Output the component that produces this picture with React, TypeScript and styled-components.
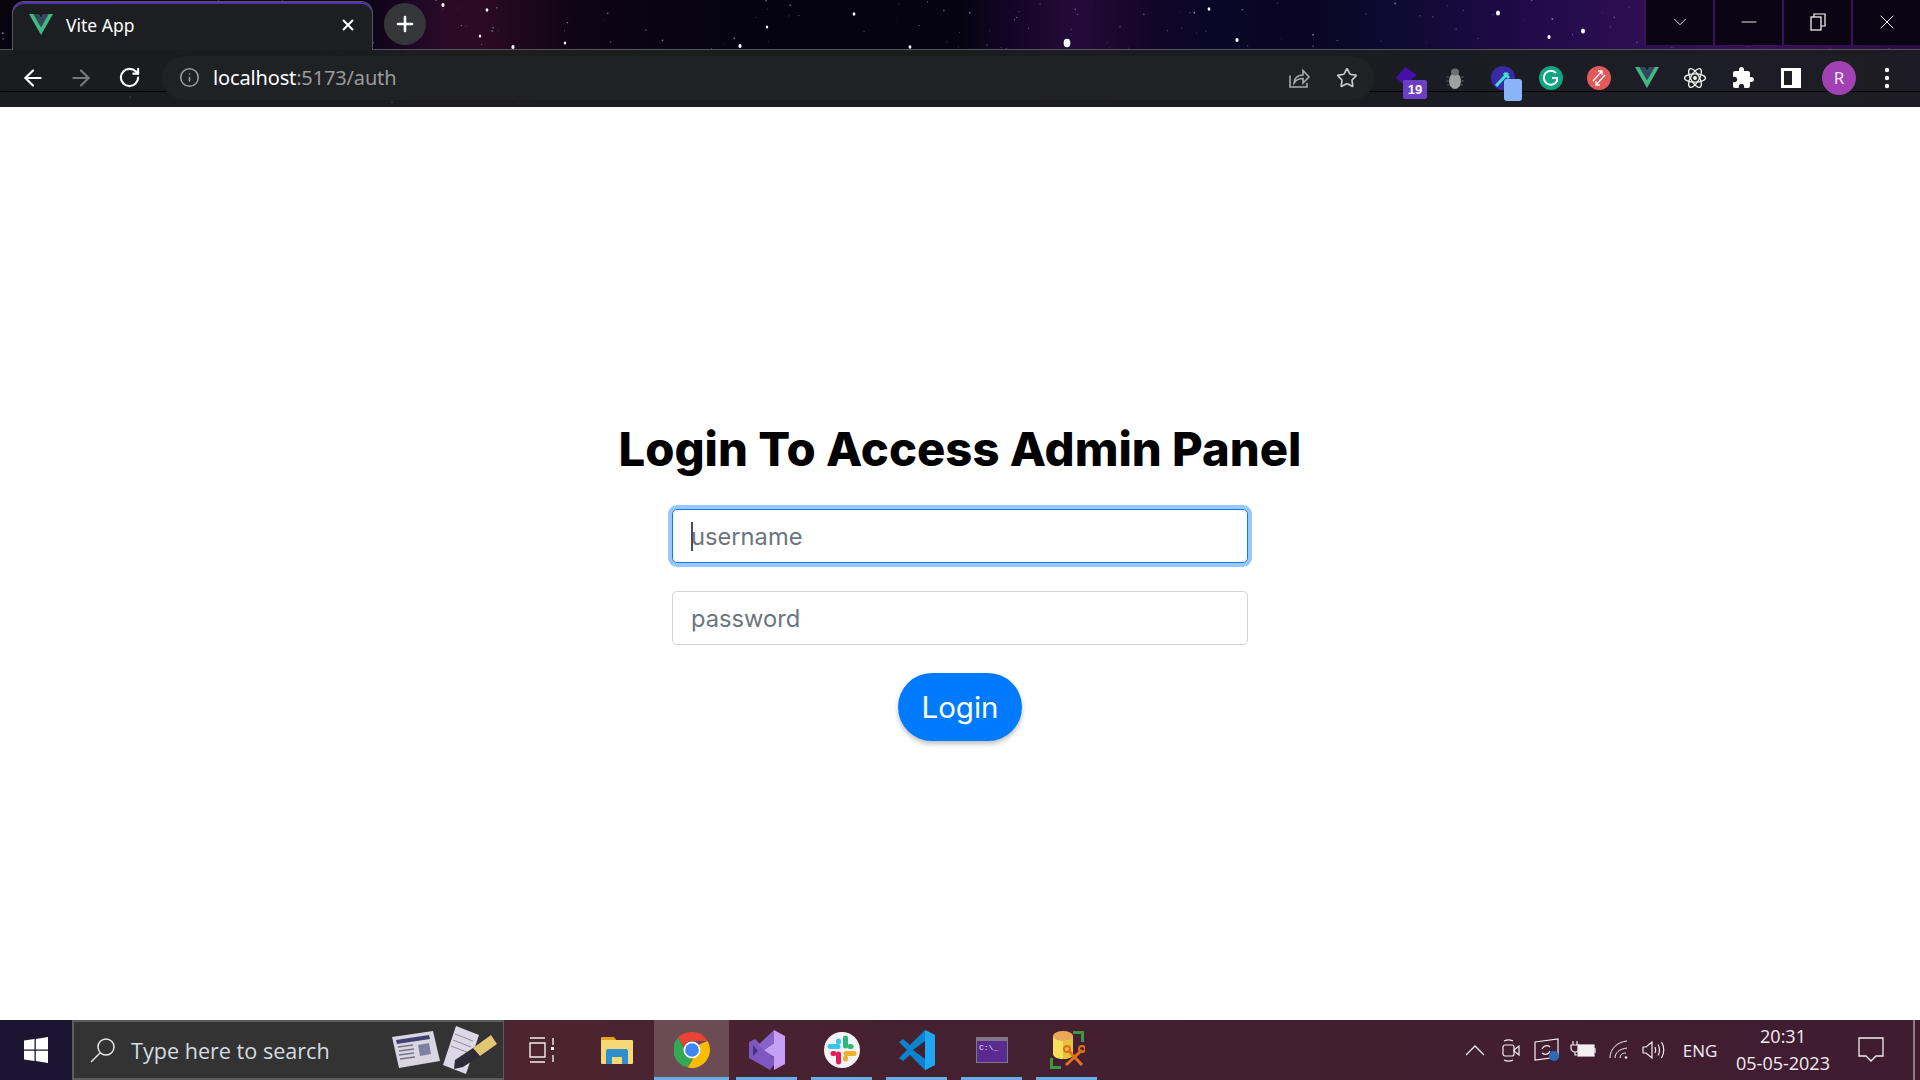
import { useMemo } from "react";
import styled, { createGlobalStyle } from "styled-components";
import { ArrowLeft, ArrowRight, ChevronDown, Info, Minus, Plus, RotateCw, Star, X } from "lucide-react";

const GlobalStyle = createGlobalStyle`
  html, body {
    margin: 0;
    height: 100%;
    background: #fff;
    overflow: hidden;
  }
  #root {
    height: 100%;
  }
  * {
    box-sizing: border-box;
  }
`;

const Screen = styled.div`
  height: 1080px;
  display: flex;
  flex-direction: column;
  font-family: "Noto Sans", sans-serif;
`;

const BrowserFrame = styled.header`
  position: relative;
  height: 107px;
  flex: none;
  overflow: hidden;
  background: linear-gradient(
    90deg,
    #07030f 0%,
    #0b0418 19%,
    #2a0a26 23%,
    #2c0a24 25%,
    #0e0414 30%,
    #050312 38%,
    #050312 50%,
    #150628 53%,
    #260a3a 56%,
    #120628 60%,
    #0a0628 63%,
    #0a0520 68%,
    #0c0a30 72%,
    #1c0a44 78%,
    #2a0e50 84%,
    #3a1058 92%,
    #2c0c48 100%
  );
`;

const StarField = styled.svg`
  position: absolute;
  inset: 0;
`;

const TabStrip = styled.div`
  position: relative;
  height: 50px;
  display: flex;
  align-items: flex-end;
  padding-left: 12px;
  border-bottom: 1px solid #55565a;
`;

const Tab = styled.div`
  width: 361px;
  height: 49px;
  margin-bottom: -1px;
  display: flex;
  align-items: center;
  padding: 0 15px 2px 16px;
  gap: 13px;
  background: #1c1e21;
  border: 1px solid #55565a;
  border-bottom: none;
  border-radius: 12px 12px 0 0;
  box-shadow: inset 0 2px 0 #5230b4;
  color: #fff;
  font-size: 17.5px;
`;

const TabTitle = styled.span`
  flex: 1;
`;

const NewTab = styled.div`
  width: 42px;
  height: 42px;
  margin: 0 0 4px 11px;
  border-radius: 50%;
  background: #35363a;
  color: #fff;
  display: flex;
  align-items: center;
  justify-content: center;
`;

const WindowControls = styled.div`
  margin-left: auto;
  align-self: flex-start;
  height: 45px;
  display: flex;
`;

const WindowButton = styled.div`
  width: 69px;
  padding-bottom: 2px;
  display: flex;
  align-items: center;
  justify-content: center;
  color: #fff;
  background: #0b0413;
  border-left: 2px solid #3d0f5c;
`;

const Toolbar = styled.div`
  position: relative;
  height: 57px;
  display: flex;
  align-items: center;
  padding: 0 9px 2px;
  background: rgba(28, 30, 33, 0.93);
  &::before {
    content: "";
    position: absolute;
    left: 0;
    right: 0;
    top: 41px;
    height: 1px;
    background: rgba(0, 0, 0, 0.85);
  }
`;

const ToolButton = styled.div<{ $dim?: boolean }>`
  position: relative;
  width: 48px;
  height: 48px;
  flex: none;
  display: flex;
  align-items: center;
  justify-content: center;
  color: ${(p) => (p.$dim ? "#77787a" : "#fff")};
`;

const OmniBox = styled.div`
  position: relative;
  flex: none;
  width: 1212px;
  height: 44px;
  margin: 0 9px 0 9px;
  padding: 0 3px 0 12px;
  display: flex;
  align-items: center;
  border-radius: 22px;
  background: #202124;
`;

const SecurityIcon = styled.div`
  width: 30px;
  display: flex;
  justify-content: center;
  color: #9a9b9d;
`;

const Url = styled.div`
  flex: 1;
  margin-left: 9px;
  font-size: 20px;
  color: #fff;
  letter-spacing: -0.15px;
`;

const UrlMuted = styled.span`
  color: #9a9b9d;
`;

const ExtensionBadge = styled.span`
  position: absolute;
  right: 4px;
  bottom: 3px;
  width: 24px;
  height: 19px;
  border-radius: 2px;
  background: #6b3fc4;
  color: #fff;
  font: 700 13px/19px "Liberation Sans", sans-serif;
  text-align: center;
`;

const PickerChip = styled.span`
  position: absolute;
  right: 5px;
  bottom: 1px;
  width: 18px;
  height: 22px;
  border-radius: 3px;
  background: #8ab4f8;
`;

const Avatar = styled.div`
  width: 34px;
  height: 34px;
  border-radius: 50%;
  background: #a142b4;
  color: #f2e6f5;
  font: 400 17px/34px "Noto Sans", sans-serif;
  text-align: center;
`;

const Page = styled.main`
  flex: 1;
  display: flex;
  flex-direction: column;
  align-items: center;
  padding-top: 312px;
  background: #fff;
`;

const Heading = styled.h1`
  margin: 0 0 30px;
  font: 800 47.2px/60px Inter, sans-serif;
  color: #000;
`;

const Form = styled.form`
  width: 576px;
  display: flex;
  flex-direction: column;
  align-items: center;
  gap: 28px;
`;

const Field = styled.div`
  position: relative;
  width: 100%;
`;

const TextField = styled.input<{ $focused?: boolean }>`
  display: block;
  width: 100%;
  height: 54px;
  padding: 0 18px;
  border: 1px solid ${(p) => (p.$focused ? "#0d7dfb" : "#ced4da")};
  border-radius: 5px;
  outline: none;
  box-shadow: ${(p) => (p.$focused ? "0 0 0 4px #99c8ff" : "none")};
  caret-color: transparent;
  font: 400 23.7px Inter, sans-serif;
  &::placeholder {
    color: #6c757d;
    opacity: 1;
  }
`;

const Caret = styled.span`
  position: absolute;
  left: 19px;
  top: 13px;
  width: 2px;
  height: 29px;
  background: #495057;
`;

const LoginButton = styled.button`
  width: 124px;
  height: 68px;
  border: none;
  border-radius: 34px;
  background: #007bff;
  color: #fff;
  font: 400 29.5px Inter, sans-serif;
  box-shadow: 0 3px 5px rgba(0, 0, 0, 0.25);
`;

const Taskbar = styled.footer`
  height: 60px;
  flex: none;
  display: flex;
  background: linear-gradient(90deg, #1d1631 0%, #1d1631 3.7%, #4c2530 27%, #452030 50%, #3f1c30 100%);
`;

const StartButton = styled.div`
  width: 72px;
  display: flex;
  align-items: center;
  justify-content: center;
  background: #1c1531;
`;

const SearchBox = styled.div`
  width: 432px;
  display: flex;
  align-items: center;
  padding: 0 6px 0 16px;
  background: #333;
  border: 2px solid #5c5c5c;
  border-right-width: 1px;
  color: #d6dce0;
  font: 400 21.6px "Open Sans", sans-serif;
`;

const SearchLabel = styled.span`
  flex: 1;
  margin-left: 15px;
`;

const TaskSlot = styled.div<{ $active?: boolean; $open?: boolean }>`
  position: relative;
  width: 75px;
  display: flex;
  align-items: center;
  justify-content: center;
  background: ${(p) => (p.$active ? "#6b4c55" : "transparent")};
  &::after {
    content: "";
    display: ${(p) => (p.$open ? "block" : "none")};
    position: absolute;
    bottom: 0;
    left: ${(p) => (p.$active ? "0" : "7px")};
    right: ${(p) => (p.$active ? "0" : "7px")};
    height: 3px;
    background: #67ade6;
  }
`;

const Tray = styled.div`
  margin-left: auto;
  display: flex;
  align-items: center;
  color: #f3eef0;
`;

const TrayIcon = styled.div<{ $w: number }>`
  width: ${(p) => p.$w}px;
  display: flex;
  justify-content: center;
`;

const TrayLang = styled.div`
  width: 50px;
  margin: 0 8px 0 4px;
  text-align: center;
  font: 400 17px "Open Sans", sans-serif;
`;

const Clock = styled.div`
  width: 100px;
  text-align: center;
  font: 400 18px/27px "Open Sans", sans-serif;
`;

const NotifyButton = styled.div`
  width: 80px;
  height: 60px;
  padding-right: 4px;
  display: flex;
  align-items: center;
  justify-content: center;
`;

const DesktopPeek = styled.div`
  width: 7px;
  height: 60px;
  border-left: 2px solid #8d7a85;
`;

function mulberry(seed: number) {
  let a = seed;
  return () => {
    a = (a + 0x6d2b79f5) | 0;
    let t = Math.imul(a ^ (a >>> 15), 1 | a);
    t = (t + Math.imul(t ^ (t >>> 7), 61 | t)) ^ t;
    return ((t ^ (t >>> 14)) >>> 0) / 4294967296;
  };
}

// the brightest stars of the theme picture
const BRIGHT_STARS: [number, number, number][] = [
  [443, 5, 1.6], [487, 10, 1.4], [480, 36, 1.2], [513, 47, 1.6], [565, 43, 1.2], [740, 46, 1.6], [767, 27, 1.2],
  [854, 14, 1.4], [910, 47, 1.4], [1067, 43, 3.4], [1209, 9, 1.4], [1237, 40, 1.6], [1498, 13, 2], [1583, 31, 2],
  [1549, 37, 1.6], [130, 97, 1.2], [392, 102, 1],
];

function Stars() {
  const dots = useMemo(() => {
    const rand = mulberry(19);
    return Array.from({ length: 300 }, () => ({
      x: rand() * 1920,
      y: rand() * 107,
      r: 0.4 + rand() * 0.6,
      o: 0.2 + rand() * 0.45,
    }));
  }, []);
  return (
    <StarField width="1920" height="107">
      {dots.map((d, i) => (
        <circle key={i} cx={d.x} cy={d.y} r={d.r} fill="#c9c2f5" opacity={d.o} />
      ))}
      {BRIGHT_STARS.map(([x, y, r]) => (
        <ellipse key={`${x}-${y}`} cx={x} cy={y} rx={r} ry={r * 1.25} fill="#fff" />
      ))}
    </StarField>
  );
}

function VueLogo({ size = 24 }: { size?: number }) {
  return (
    <svg width={size} height={size} viewBox="0 0 24 22">
      <path d="M0 0h9.6L12 4.2 14.4 0H24L12 21z" fill="#42b883" />
      <path d="M4.2 0h5.4L12 4.2 14.4 0h5.400L12 13.500z" fill="#35495e" />
    </svg>
  );
}

function ShareIcon() {
  return (
    <svg width="24" height="24" viewBox="0 0 24 24" fill="none" stroke="#a9aaac" strokeWidth="1.6">
      <path d="M3 9.5V21h17v-4" />
      <path d="M7 17c0-5 4-8 9-8V4.5l6 6.5-6 6v-4.500c-4 0-7 1.500-9 4.500z" />
    </svg>
  );
}

function BugIcon() {
  return (
    <svg width="22" height="24" viewBox="0 0 22 24">
      <ellipse cx="11" cy="15" rx="6" ry="8" fill="#a0a1a2" />
      <ellipse cx="11" cy="6" rx="4" ry="3.500" fill="#6e6f70" />
      <path d="M2 11h3M2 15h3M3 19h3M17 11h3M17 15h3M16 19h3" stroke="#55565a" strokeWidth="1" />
    </svg>
  );
}

function AtomIcon() {
  return (
    <svg width="24" height="24" viewBox="0 0 24 24" fill="none" stroke="#f1f1f1" strokeWidth="1.300">
      <ellipse cx="12" cy="12" rx="10.500" ry="4.200" />
      <ellipse cx="12" cy="12" rx="10.500" ry="4.200" transform="rotate(60 12 12)" />
      <ellipse cx="12" cy="12" rx="10.500" ry="4.200" transform="rotate(120 12 12)" />
      <circle cx="12" cy="12" r="2" fill="#f1f1f1" stroke="none" />
    </svg>
  );
}

function PuzzleIcon() {
  return (
    <svg width="24" height="24" viewBox="0 0 24 24">
      <path
        d="M20.5 11H19V7c0-1.100-.9-2-2-2h-4V3.500C13 2.120 11.880 1 10.500 1S8 2.120 8 3.500V5H4c-1.100 0-1.990.9-1.990 2v3.800H3.500c1.490 0 2.700 1.210 2.700 2.700s-1.210 2.700-2.700 2.700H2V20c0 1.100.9 2 2 2h3.800v-1.500c0-1.490 1.210-2.700 2.700-2.700 1.490 0 2.700 1.210 2.700 2.700V22H17c1.100 0 2-.9 2-2v-4h1.500c1.380 0 2.500-1.120 2.500-2.500S21.880 11 20.500 11z"
        fill="#fff"
      />
    </svg>
  );
}

function ChromeLogo() {
  return (
    <svg width="36" height="36" viewBox="0 0 36 36">
      <path d="M18 0a18 18 0 0 1 15.600 9H18a9 9 0 0 0-8.300 5.500L4 5.800A18 18 0 0 1 18 0z" fill="#ea4335" />
      <path d="M4 5.800l8.500 14.700a9 9 0 0 0 7 4.300L13.800 35.500A18 18 0 0 1 4 5.800z" fill="#34a853" />
      <path d="M33.600 9A18 18 0 0 1 13.800 35.500l7.900-13.600A9 9 0 0 0 25 12.500z" fill="#fbbc04" />
      <circle cx="18" cy="18" r="8.500" fill="#fff" />
      <circle cx="18" cy="18" r="6.800" fill="#4285f4" />
    </svg>
  );
}

function VisualStudioLogo() {
  return (
    <svg width="36" height="40" viewBox="0 0 36 40">
      <path d="M0 12l6-3 22 22-7 9L0 28z" fill="#7e57c2" />
      <path d="M4 15v11l5-5z" fill="#4a2e83" />
      <path d="M25 0l11 6v28l-11 6V27l-10-7 10-7z" fill="#c79ef5" />
      <path d="M25 0v13l-10 7-6-5z" fill="#8a63c9" />
    </svg>
  );
}

function SlackLogo() {
  return (
    <svg width="36" height="36" viewBox="0 0 36 36">
      <circle cx="18" cy="18" r="18" fill="#f4f4f4" />
      <g strokeWidth="5" strokeLinecap="round" fill="none">
        <path d="M6 14.500h8" stroke="#36c5f0" />
        <path d="M14.500 9v1" stroke="#36c5f0" />
        <path d="M21.500 6v8" stroke="#2eb67d" />
        <path d="M26 14.500h1" stroke="#2eb67d" />
        <path d="M22 21.500h8" stroke="#ecb22e" />
        <path d="M21.500 26v1" stroke="#ecb22e" />
        <path d="M14.500 22v8" stroke="#e01e5a" />
        <path d="M9 21.500h1" stroke="#e01e5a" />
      </g>
    </svg>
  );
}

function VsCodeLogo() {
  return (
    <svg width="36" height="40" viewBox="0 0 36 40">
      <path d="M26 0l10 5v30l-10 5L11 25l-7 6-4-3 8-8-8-8 4-3 7 6z" fill="#0a84cf" />
      <path d="M26 0l10 5v30l-10 5z" fill="#1fa8f1" />
      <path d="M26 11L14 20l12 9z" fill="#452030" />
    </svg>
  );
}

function TerminalLogo() {
  return (
    <svg width="32" height="26" viewBox="0 0 32 26">
      <rect width="32" height="26" fill="#7d7a86" />
      <rect x="1" y="4" width="30" height="21" fill="#5a2a91" />
      <text x="3" y="13" fontSize="8" fontFamily="Liberation Mono" fill="#e8e2f0">C:\_</text>
    </svg>
  );
}

function DbToolLogo() {
  return (
    <svg width="36" height="40" viewBox="0 0 36 40">
      <path d="M24 1h11v11h-3V4h-8zM1 28h3v8h8v3H1z" fill="#3b9a3e" />
      <path d="M4 6v18c0 3 5 5 10 5s10-2 10-5V6z" fill="#f6df5a" />
      <path d="M14 11v18c5 0 10-2 10-5V6c0 3-5 5-10 5z" fill="#e6c33e" />
      <ellipse cx="14" cy="6" rx="10" ry="5" fill="#e7a857" />
      <path d="M17 35L33 20M19 20l14 15" stroke="#e2711d" strokeWidth="3" />
      <circle cx="33" cy="19" r="3" fill="none" stroke="#e2711d" strokeWidth="2" />
      <circle cx="18" cy="19" r="3" fill="none" stroke="#e2711d" strokeWidth="2" />
    </svg>
  );
}

function WindowsLogo() {
  return (
    <svg width="24" height="26" viewBox="0 0 24 26">
      <path d="M0 3.500l10.500-1.400v10.300H0zM11.800 2L24 0v12.400H11.800zM0 13.700h10.500v10.200L0 22.500zM11.800 13.700H24V26l-12.200-2z" fill="#fff" />
    </svg>
  );
}

function SearchGlyph() {
  return (
    <svg width="26" height="26" viewBox="0 0 26 26" fill="none" stroke="#e8e8e8" strokeWidth="1.500">
      <circle cx="16" cy="10" r="8" />
      <path d="M10 16L1 25" />
    </svg>
  );
}

function NewsIcon() {
  return (
    <svg width="52" height="40" viewBox="0 0 52 40">
      <path d="M1 7L42 1l7 30-41 7z" fill="#d9d6e2" />
      <path d="M5 10l33-5 1 4-33 5z" fill="#41406e" />
      <path d="M7 17l15-2M8 21l15-2M8 25l15-2M9 29l15-2" stroke="#777488" strokeWidth="1.500" />
      <path d="M27 15l11-2 2 11-11 2z" fill="#7f7ea3" />
    </svg>
  );
}

function NotesIcon() {
  return (
    <svg width="54" height="48" viewBox="0 0 54 48">
      <path d="M13 0l23 9-13 39L0 39z" fill="#dcd8e6" />
      <path d="M12 8l18 7M10 14l18 7M8 20l18 7" stroke="#8c89a0" strokeWidth="1" />
      <path d="M12 34L42 14l6 9-28 18-9 2z" fill="#2d2b38" />
      <path d="M30 22l18-13 6 9-17 12z" fill="#e2c673" />
    </svg>
  );
}

function TaskViewGlyph() {
  return (
    <svg width="26" height="26" viewBox="0 0 26 26" fill="none" stroke="#f2eef0" strokeWidth="1.400">
      <path d="M1 1h15M1 25h15M1 6h15v14H1zM24 1v7M24 18v7" />
      <rect x="22" y="10" width="3" height="3" fill="#f2eef0" stroke="none" />
    </svg>
  );
}

function FolderLogo() {
  return (
    <svg width="32" height="28" viewBox="0 0 32 28">
      <path d="M0 2a1 1 0 0 1 1-1h12l3 4H0z" fill="#dfa328" />
      <rect y="4" width="32" height="24" rx="1" fill="#f8d775" />
      <path d="M5 28v-13a2 2 0 0 1 2-2h18a2 2 0 0 1 2 2v13h-6v-7H11v7z" fill="#2d8fd0" />
    </svg>
  );
}

function MeetGlyph() {
  return (
    <svg width="18" height="24" viewBox="0 0 18 24" fill="none" stroke="currentColor" strokeWidth="1.200">
      <rect x="1" y="7" width="11" height="11" rx="2" />
      <path d="M12 12l5-4v9l-5-4zM2 3c3-1.500 6-1.500 9 0M2 22c3 1.500 6 1.500 9 0" />
    </svg>
  );
}

function SyncGlyph() {
  return (
    <svg width="26" height="24" viewBox="0 0 26 24">
      <path d="M1 4L24 1v18L1 22z" fill="none" stroke="currentColor" strokeWidth="1.200" />
      <path d="M8 11a5 5 0 0 1 8-2M16 13a5 5 0 0 1-8 2" fill="none" stroke="currentColor" strokeWidth="1.200" />
      <circle cx="20" cy="18" r="5" fill="#2b6cb8" />
    </svg>
  );
}

function BatteryGlyph() {
  return (
    <svg width="26" height="18" viewBox="0 0 26 18" fill="none" stroke="currentColor" strokeWidth="1.200">
      <path d="M3 0v4M7 0v4M1 4h8v3a4 4 0 0 1-8 0zM5 11v3h2" />
      <rect x="8" y="4" width="16" height="11" fill="currentColor" />
      <path d="M25 7v5" />
    </svg>
  );
}

function WifiGlyph() {
  return (
    <svg width="20" height="20" viewBox="0 0 20 20" fill="none" stroke="currentColor" strokeWidth="1">
      <path d="M1 18C1 9 8 2 18 1M6 18c0-5 4-9 12-10M11 18c0-3 2-5 6-5" />
      <circle cx="17" cy="17.500" r="1.300" fill="currentColor" stroke="none" />
    </svg>
  );
}

function VolumeGlyph() {
  return (
    <svg width="24" height="20" viewBox="0 0 24 20" fill="none" stroke="currentColor" strokeWidth="1.200">
      <path d="M1 7h3l6-5v16l-6-5H1zM13 7c1 2 1 4 0 6M16 4.500c2 3 2 8 0 11M19.500 2c3 4.500 3 11.500 0 16" />
    </svg>
  );
}

function ChevronUpGlyph() {
  return (
    <svg width="20" height="12" viewBox="0 0 20 12" fill="none" stroke="currentColor" strokeWidth="1.300">
      <path d="M1 11l9-9 9 9" />
    </svg>
  );
}

function NotifyGlyph() {
  return (
    <svg width="26" height="26" viewBox="0 0 26 26" fill="none" stroke="#f3eef0" strokeWidth="1.300">
      <path d="M1 1h24v18h-7l-5 5-5-5H1z" />
    </svg>
  );
}

function RestoreGlyph() {
  return (
    <svg width="16" height="18" viewBox="0 0 16 18" fill="none" stroke="#fff" strokeWidth="1.200">
      <rect x="1" y="4" width="10" height="13" />
      <path d="M4 4V1h11v12h-4" />
    </svg>
  );
}

function PlainDiamond() {
  return (
    <svg width="24" height="24" viewBox="0 0 24 24">
      <path d="M10 1l12 8-6 5-4 7L1 12z" fill="#4411a8" />
    </svg>
  );
}

function PickerIcon() {
  return (
    <svg width="24" height="24" viewBox="0 0 24 24">
      <circle cx="12" cy="12" r="12" fill="#3b2aa8" />
      <path d="M5 20L17 7M13 7l5 5" stroke="#3fe0d0" strokeWidth="3" />
    </svg>
  );
}

function GrammarlyIcon() {
  return (
    <svg width="24" height="24" viewBox="0 0 24 24">
      <circle cx="12" cy="12" r="12" fill="#11a683" />
      <path d="M17 7a7 7 0 1 0 1 8v-3h-5" fill="none" stroke="#fff" strokeWidth="2" />
    </svg>
  );
}

function RedSwapIcon() {
  return (
    <svg width="24" height="24" viewBox="0 0 24 24" fill="none" stroke="#fff" strokeWidth="1.300">
      <circle cx="12" cy="12" r="12" fill="#e05a5a" stroke="none" />
      <path d="M6 15l9-10M9 19l9-10M11 5h4v4M9 15v4h4" />
    </svg>
  );
}

function SidePanelIcon() {
  return (
    <svg width="22" height="22" viewBox="0 0 22 22">
      <path d="M1 1h20v20H1z" fill="#fff" />
      <path d="M4 4h8v14H4z" fill="#1c1e21" />
    </svg>
  );
}

function KebabIcon() {
  return (
    <svg width="6" height="22" viewBox="0 0 6 22">
      <circle cx="3" cy="3" r="2.200" fill="#fff" />
      <circle cx="3" cy="11" r="2.200" fill="#fff" />
      <circle cx="3" cy="19" r="2.200" fill="#fff" />
    </svg>
  );
}

export default function App() {
  return (
    <>
      <GlobalStyle />
      <Screen>
        <BrowserFrame>
          <Stars />
          <TabStrip>
            <Tab>
              <VueLogo />
              <TabTitle>Vite App</TabTitle>
              <X size={18} strokeWidth={2.6} />
            </Tab>
            <NewTab>
              <Plus size={24} strokeWidth={2.6} />
            </NewTab>
            <WindowControls>
              <WindowButton>
                <ChevronDown size={22} strokeWidth={1} />
              </WindowButton>
              <WindowButton>
                <Minus size={24} strokeWidth={0.9} />
              </WindowButton>
              <WindowButton>
                <RestoreGlyph />
              </WindowButton>
              <WindowButton>
                <X size={24} strokeWidth={1} />
              </WindowButton>
            </WindowControls>
          </TabStrip>
          <Toolbar>
            <ToolButton>
              <ArrowLeft size={26} strokeWidth={2} />
            </ToolButton>
            <ToolButton $dim>
              <ArrowRight size={26} strokeWidth={2} />
            </ToolButton>
            <ToolButton>
              <RotateCw size={23} strokeWidth={2.2} />
            </ToolButton>
            <OmniBox>
              <SecurityIcon>
                <Info size={21} strokeWidth={1.8} />
              </SecurityIcon>
              <Url>
                localhost<UrlMuted>:5173/auth</UrlMuted>
              </Url>
              <ToolButton>
                <ShareIcon />
              </ToolButton>
              <ToolButton>
                <Star size={22} strokeWidth={1.8} color="#c9cacc" />
              </ToolButton>
            </OmniBox>
            <ToolButton>
              <PlainDiamond />
              <ExtensionBadge>19</ExtensionBadge>
            </ToolButton>
            <ToolButton>
              <BugIcon />
            </ToolButton>
            <ToolButton>
              <PickerIcon />
              <PickerChip />
            </ToolButton>
            <ToolButton>
              <GrammarlyIcon />
            </ToolButton>
            <ToolButton>
              <RedSwapIcon />
            </ToolButton>
            <ToolButton>
              <VueLogo />
            </ToolButton>
            <ToolButton>
              <AtomIcon />
            </ToolButton>
            <ToolButton>
              <PuzzleIcon />
            </ToolButton>
            <ToolButton>
              <SidePanelIcon />
            </ToolButton>
            <ToolButton>
              <Avatar>R</Avatar>
            </ToolButton>
            <ToolButton>
              <KebabIcon />
            </ToolButton>
          </Toolbar>
        </BrowserFrame>

        <Page>
          <Heading>Login To Access Admin Panel</Heading>
          <Form>
            <Field>
              <TextField $focused placeholder="username" />
              <Caret />
            </Field>
            <Field>
              <TextField placeholder="password" type="password" />
            </Field>
            <LoginButton type="button">Login</LoginButton>
          </Form>
        </Page>

        <Taskbar>
          <StartButton>
            <WindowsLogo />
          </StartButton>
          <SearchBox>
            <SearchGlyph />
            <SearchLabel>Type here to search</SearchLabel>
            <NewsIcon />
            <NotesIcon />
          </SearchBox>
          <TaskSlot>
            <TaskViewGlyph />
          </TaskSlot>
          <TaskSlot>
            <FolderLogo />
          </TaskSlot>
          <TaskSlot $open $active>
            <ChromeLogo />
          </TaskSlot>
          <TaskSlot $open>
            <VisualStudioLogo />
          </TaskSlot>
          <TaskSlot $open>
            <SlackLogo />
          </TaskSlot>
          <TaskSlot $open>
            <VsCodeLogo />
          </TaskSlot>
          <TaskSlot $open>
            <TerminalLogo />
          </TaskSlot>
          <TaskSlot $open>
            <DbToolLogo />
          </TaskSlot>
          <Tray>
            <TrayIcon $w={37}>
              <ChevronUpGlyph />
            </TrayIcon>
            <TrayIcon $w={36}>
              <MeetGlyph />
            </TrayIcon>
            <TrayIcon $w={36}>
              <SyncGlyph />
            </TrayIcon>
            <TrayIcon $w={36}>
              <BatteryGlyph />
            </TrayIcon>
            <TrayIcon $w={36}>
              <WifiGlyph />
            </TrayIcon>
            <TrayIcon $w={34}>
              <VolumeGlyph />
            </TrayIcon>
            <TrayLang>ENG</TrayLang>
            <Clock>
              20:31
              <br />
              05-05-2023
            </Clock>
            <NotifyButton>
              <NotifyGlyph />
            </NotifyButton>
            <DesktopPeek />
          </Tray>
        </Taskbar>
      </Screen>
    </>
  );
}
